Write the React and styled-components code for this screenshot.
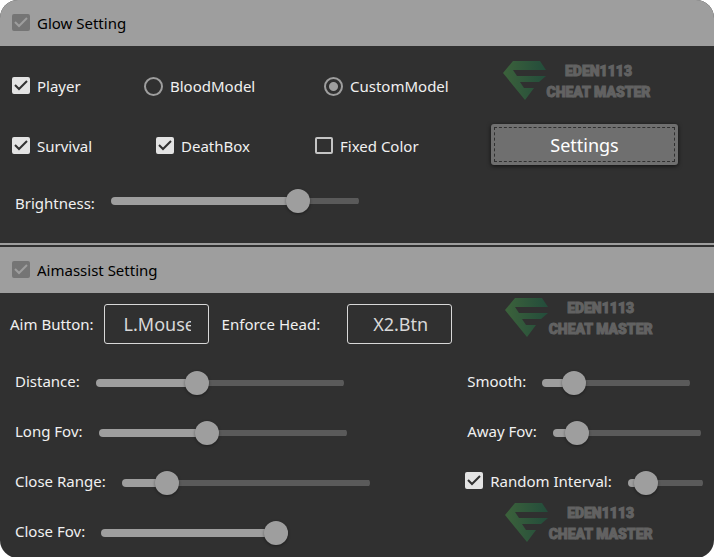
import React, { useId, useState } from 'react'
import styled, { createGlobalStyle, css } from 'styled-components'

const GlobalStyle = createGlobalStyle`
  * {
    box-sizing: border-box;
  }
  body {
    margin: 0;
    background-color: #ffffff;
    font-family: "Noto Sans", "Open Sans", sans-serif;
    font-size: 15px;
    line-height: 20px;
    color: #f0f0f0;
  }
`

const Window = styled.main`
  background-color: #303030;
  border-radius: 18px;
  overflow: hidden;
`

const Section = styled.section`
  & + & {
    border-top: 2px solid #9e9e9e;
    padding-top: 2px;
  }
`

const Header = styled.header`
  display: flex;
  align-items: center;
  height: 46px;
  padding: 0 12px;
  background-color: #9e9e9e;
  color: #000000;
`

const GlowBody = styled.div`
  display: grid;
  grid-template-columns: 1fr 223px;
  padding: 10px 0 17px;
`

const AimBody = styled.div`
  display: grid;
  grid-template-columns: 1fr 250px;
`

const OptionRow = styled.div`
  display: grid;
  grid-template-columns: ${p => p.$columns};
  align-items: center;
  height: 60px;
  padding-left: 12px;
`

const CheckLabel = styled.label`
  display: inline-flex;
  align-items: center;
  gap: 7px;
  white-space: nowrap;
`

const SliderRow = styled.div`
  display: flex;
  align-items: center;
  gap: 16px;
  height: 50px;
  padding-left: ${p => p.$indent}px;
  > ${CheckLabel} {
    padding-bottom: 4px;
  }
`

const SliderLabel = styled.label`
  padding: ${p => (p.$low ? '4px 0 0' : '0 0 4px')};
  white-space: nowrap;
`

const KeyRow = styled.div`
  display: flex;
  align-items: center;
  height: 65px;
  padding: 0 0 4px 10px;
`

const KeyLabel = styled.label`
  margin-right: ${p => p.$gap}px;
  white-space: nowrap;
`

const KeyInput = styled.input`
  width: 105px;
  height: 40px;
  margin-right: 13px;
  padding: 0 17px 0 19px;
  border: 1px solid #d8d8d8;
  border-radius: 3px;
  background-color: transparent;
  color: #d8d8d8;
  font: inherit;
  font-size: 18px;
  text-align: center;
`

const Box = styled.span`
  display: grid;
  width: 18px;
  height: 18px;
  > * {
    grid-area: 1 / 1;
  }
  > svg {
    pointer-events: none;
    fill: none;
    stroke: #303030;
    stroke-width: 2;
  }
`

const BoxInput = styled.input`
  appearance: none;
  width: 18px;
  height: 17px;
  margin: 0;
  border: 2px solid #c4c4c4;
  border-radius: 2px;
  &:checked {
    border-color: #e3e3e3;
    background-color: #e3e3e3;
  }
  &:disabled {
    border-color: #757575;
    background-color: #757575;
  }
  &:disabled + svg {
    stroke: #9e9e9e;
  }
  &:not(:checked) + svg {
    display: none;
  }
`

const RadioInput = styled.input`
  appearance: none;
  width: 19px;
  height: 19px;
  margin: 0;
  border: 2px solid #9e9e9e;
  border-radius: 50%;
  &:checked {
    background: radial-gradient(circle, #9e9e9e 4px, transparent 5px);
  }
`

const thumb = css`
  appearance: none;
  width: 24px;
  height: 24px;
  margin-top: -8px;
  border: 0;
  border-radius: 50%;
  background-color: #9e9e9e;
  box-shadow: 0 1px 3px rgba(0, 0, 0, 0.4);
`

const Range = styled.input`
  appearance: none;
  width: ${p => p.$width}px;
  height: 24px;
  margin: 0;
  background: transparent;
  &::-webkit-slider-runnable-track {
    height: 8px;
    border-radius: 4px;
    background:
      linear-gradient(#9e9e9e, #9e9e9e) left / var(--fill) 8px no-repeat,
      linear-gradient(#5a5a5a, #5a5a5a) center / 100% 6px no-repeat;
  }
  &::-webkit-slider-thumb {
    ${thumb}
  }
`

const SettingsButton = styled.button`
  width: 187px;
  height: 41px;
  padding: 3px;
  border: 0;
  border-radius: 3px;
  background-color: #6f6f6f;
  box-shadow: 0 1px 4px rgba(0, 0, 0, 0.7);
  color: #ffffff;
  font: inherit;
  font-size: 18px;
  > span {
    display: grid;
    place-items: center;
    height: 100%;
    border: 1px dashed #303030;
  }
`

const GlowAside = styled.div`
  display: flex;
  flex-direction: column;
  align-items: flex-start;
  gap: 24px;
  padding-top: 4px;
  > :first-child {
    margin-left: 12px;
  }
`

const BrandSlot = styled.div`
  height: 65px;
  padding: 4px 0 0 40px;
  &:last-child {
    height: 59px;
    margin-top: -10px;
  }
`

const BrandBox = styled.div`
  display: flex;
  height: 40px;
  > svg {
    flex: none;
  }
`

const BrandText = styled.div`
  width: 105px;
  padding-top: 1px;
  font-family: "Roboto", sans-serif;
  font-weight: 900;
  font-size: 14px;
  line-height: 21px;
  text-align: center;
  white-space: nowrap;
  color: #626262;
  -webkit-text-stroke: 1px #626262;
`

const Brand = () => {
  const id = useId()
  return (
    <BrandBox>
      <svg width="43" height="40" viewBox="0 0 43 40">
        <defs>
          <linearGradient id={id} x1="0" y1="0" x2="1" y2="0">
            <stop offset="0" stopColor="#3c623b" />
            <stop offset="1" stopColor="#234c3b" />
          </linearGradient>
        </defs>
        <path
          fill={`url(#${id})`}
          d="M0 13 L10 1 H37 L43 10 H10 L14 16 H43 L36 22 H17 L21 28 H31 L22 40 Z"
        />
      </svg>
      <BrandText>
        EDEN1113
        <br />
        CHEAT MASTER
      </BrandText>
    </BrandBox>
  )
}

const Checkbox = ({ children, ...props }) => (
  <CheckLabel>
    <Box>
      <BoxInput type="checkbox" {...props} />
      <svg width="18" height="17" viewBox="0 0 18 17">
        <path d="M3 8 L7 12 L15 4" />
      </svg>
    </Box>
    <span>{children}</span>
  </CheckLabel>
)

const Radio = ({ children, ...props }) => (
  <CheckLabel>
    <RadioInput type="radio" {...props} />
    <span>{children}</span>
  </CheckLabel>
)

const Slider = ({ width, initial, ...props }) => {
  const [value, setValue] = useState(initial)
  return (
    <Range
      {...props}
      type="range"
      $width={width}
      value={value}
      onChange={e => setValue(Number(e.target.value))}
      style={{ '--fill': `${value}%` }}
    />
  )
}

const aimSliders = [
  { id: 'distance', title: 'Distance:', width: 248, initial: 40 },
  { id: 'long-fov', title: 'Long Fov:', width: 248, initial: 43 },
  { id: 'close-range', title: 'Close Range:', width: 248, initial: 15 },
  { id: 'close-fov', title: 'Close Fov:', width: 187, initial: 100 }
]

const sideSliders = [
  { id: 'smooth', title: 'Smooth:', width: 148, initial: 16 },
  { id: 'away-fov', title: 'Away Fov:', width: 148, initial: 10 }
]

const App = () => (
  <>
    <GlobalStyle />
    <Window>
      <Section>
        <Header>
          <Checkbox defaultChecked disabled>Glow Setting</Checkbox>
        </Header>
        <GlowBody>
          <div>
            <OptionRow $columns="132px 180px 1fr">
              <Checkbox defaultChecked>Player</Checkbox>
              <Radio name="model">BloodModel</Radio>
              <Radio name="model" defaultChecked>CustomModel</Radio>
            </OptionRow>
            <OptionRow $columns="144px 159px 1fr">
              <Checkbox defaultChecked>Survival</Checkbox>
              <Checkbox defaultChecked>DeathBox</Checkbox>
              <Checkbox>Fixed Color</Checkbox>
            </OptionRow>
            <SliderRow $indent={15}>
              <SliderLabel htmlFor="brightness" $low>Brightness:</SliderLabel>
              <Slider id="brightness" width={248} initial={78} />
            </SliderRow>
          </div>
          <GlowAside>
            <Brand />
            <SettingsButton type="button">
              <span>Settings</span>
            </SettingsButton>
          </GlowAside>
        </GlowBody>
      </Section>
      <Section>
        <Header>
          <Checkbox defaultChecked disabled>Aimassist Setting</Checkbox>
        </Header>
        <AimBody>
          <div>
            <KeyRow>
              <KeyLabel htmlFor="aim-button" $gap={10}>Aim Button:</KeyLabel>
              <KeyInput id="aim-button" defaultValue="L.Mouse" />
              <KeyLabel htmlFor="enforce-head" $gap={27}>Enforce Head:</KeyLabel>
              <KeyInput id="enforce-head" defaultValue="X2.Btn" />
            </KeyRow>
            {aimSliders.map(({ title, ...slider }) => (
              <SliderRow key={slider.id} $indent={15}>
                <SliderLabel htmlFor={slider.id}>{title}</SliderLabel>
                <Slider {...slider} />
              </SliderRow>
            ))}
          </div>
          <div>
            <BrandSlot>
              <Brand />
            </BrandSlot>
            {sideSliders.map(({ title, ...slider }) => (
              <SliderRow key={slider.id} $indent={2}>
                <SliderLabel htmlFor={slider.id}>{title}</SliderLabel>
                <Slider {...slider} />
              </SliderRow>
            ))}
            <SliderRow $indent={0}>
              <Checkbox defaultChecked>Random Interval:</Checkbox>
              <Slider aria-label="Random Interval" width={75} initial={12} />
            </SliderRow>
            <BrandSlot>
              <Brand />
            </BrandSlot>
          </div>
        </AimBody>
      </Section>
    </Window>
  </>
)

export default App
